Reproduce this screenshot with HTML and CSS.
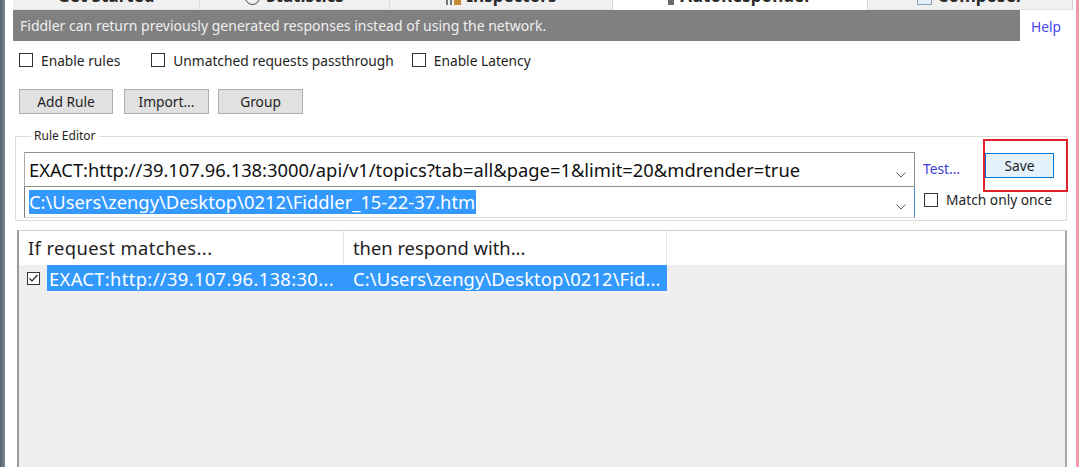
FILE: index.html
```html
<!DOCTYPE html>
<html>
<head>
<meta charset="utf-8">
<link rel="stylesheet" href="styles.css">
</head>
<body>
<div class="app">
  <div class="edge-left"></div>
  <div class="main">
    <div class="tabs">
      <div class="tab t1"><span class="tlabel">Get Started</span></div>
      <div class="tab t2"><span class="ticon round"></span><span class="tlabel">Statistics</span></div>
      <div class="tab t3"><span class="ticon bars"></span><span class="tlabel">Inspectors</span></div>
      <div class="tab t4 active"><span class="ticon bolt"></span><span class="tlabel">AutoResponder</span></div>
      <div class="tab t5"><span class="ticon sheet"></span><span class="tlabel">Composer</span></div>
    </div>
    <div class="content">
      <div class="banner-row">
        <div class="banner">Fiddler can return previously generated responses instead of using the network.</div>
        <a class="help">Help</a>
      </div>
      <div class="opts">
        <label class="chk"><span class="box"></span>Enable rules</label>
        <label class="chk"><span class="box"></span>Unmatched requests passthrough</label>
        <label class="chk"><span class="box"></span>Enable Latency</label>
      </div>
      <div class="btns">
        <button class="btn w94">Add Rule</button>
        <button class="btn w85">Import...</button>
        <button class="btn w85">Group</button>
      </div>
      <fieldset class="editor">
        <legend>Rule Editor</legend>
        <div class="editor-grid">
          <div class="combo c1"><span class="ctext">EXACT:http://39.107.96.138:3000/api/v1/topics?tab=all&amp;page=1&amp;limit=20&amp;mdrender=true</span><svg class="chev" width="10" height="6" viewBox="0 0 10 6"><path d="M0.5 0.5 L5 5 L9.5 0.5" fill="none" stroke="#606060" stroke-width="1"/></svg></div>
          <div class="side1">
            <a class="test">Test...</a>
            <button class="save">Save</button>
          </div>
          <div class="combo c2"><span class="ctext sel">C:\Users\zengy\Desktop\0212\Fiddler_15-22-37.htm</span><svg class="chev" width="10" height="6" viewBox="0 0 10 6"><path d="M0.5 0.5 L5 5 L9.5 0.5" fill="none" stroke="#606060" stroke-width="1"/></svg></div>
          <div class="side2">
            <label class="chk"><span class="box"></span>Match only once</label>
          </div>
        </div>
        <div class="redmark"></div>
      </fieldset>
      <div class="list">
        <div class="lhead">
          <div class="col col1">If request matches...</div>
          <div class="col col2">then respond with...</div>
          <div class="col rest"></div>
        </div>
        <div class="lrow">
          <span class="rchk"><svg width="13" height="13" viewBox="0 0 13 13"><rect x="0.5" y="0.5" width="12" height="12" fill="#fff" stroke="#333"/><path d="M2.5 6.5 L5 9 L10.5 3" fill="none" stroke="#222" stroke-width="1.2"/></svg></span>
          <div class="rsel">
            <span class="rc1">EXACT:http://39.107.96.138:30...</span>
            <span class="rc2">C:\Users\zengy\Desktop\0212\Fid...</span>
          </div>
        </div>
      </div>
    </div>
  </div>
  <div class="edge-right"></div>
</div>
</body>
</html>
```
FILE: styles.css
```css
* { box-sizing: border-box; }
html, body { margin: 0; padding: 0; }
body {
  width: 1080px;
  height: 467px;
  overflow: hidden;
  background: #fff;
  font-family: "Noto Sans", "Open Sans", sans-serif;
  font-size: 13.75px;
  color: #1e1e1e;
}
.app { display: flex; height: 467px; }
.edge-left { width: 5px; background: linear-gradient(90deg, #56616c, #7a8794); flex: none; }
.main { width: 1070px; flex: none; display: flex; flex-direction: column; }
.edge-right { width: 5px; flex: none; background: linear-gradient(90deg, #fff 0, #fff 1px, #f29aab 1px, #f29aab 4px, #fff 4px); }

/* tabs */
.tabs { height: 10px; display: flex; padding-left: 8px; overflow: hidden; }
.tab {
  height: 10px;
  background: #f0f0f0;
  border-right: 1px solid #d9d9d9;
  border-bottom: 1px solid #e3e3e3;
  display: flex;
  justify-content: center;
  align-items: flex-end;
  overflow: hidden;
  gap: 6px;
}
.tab.active { background: #fff; border-bottom-color: #fff; }
.t1 { width: 187px; }
.t2 { width: 190px; }
.t3 { width: 223px; }
.t4 { width: 255px; }
.t5 { width: 205px; border-right: 1px solid #cfcfcf; }
.tlabel {
  font-family: "Noto Sans", sans-serif;
  font-weight: 700;
  font-size: 17px;
  line-height: 17px;
  color: #2a2a2a;
  margin-bottom: 5.5px;
  white-space: nowrap;
}
.ticon { width: 15px; height: 15px; margin-bottom: 4px; flex: none; }
.ticon.round { border: 1.5px solid #444; border-radius: 50%; }
.ticon.bars { background: linear-gradient(90deg, #777 0 2px, transparent 2px 4px, #777 4px 6px, transparent 6px 8px, #c98a3a 8px 14px); }
.ticon.bolt { background: #6a6a6a; width: 6px; }
.ticon.sheet { border: 1px solid #8aa0b8; background: #e6eef7; }

/* content */
.content { padding-left: 8px; flex: 1; display: flex; flex-direction: column; }
.banner-row { display: flex; align-items: center; height: 31px; }
.banner {
  width: 1007px;
  height: 31px;
  background: #808080;
  color: #efefef;
  font-size: 14px;
  line-height: 31px;
  padding-left: 7px;
  letter-spacing: 0;
  white-space: nowrap;
}
.help { color: #4646f0; font-size: 13.75px; margin-left: 11px; margin-top: 2px; }

.opts { display: flex; align-items: center; height: 16px; margin-top: 11px; padding-left: 6px; }
.chk { display: flex; align-items: center; white-space: nowrap; font-size: 13.75px; color: #1e1e1e; }
.box { width: 14px; height: 14px; border: 1px solid #333; background: #fff; margin-right: 8px; flex: none; }
.opts .chk:nth-child(1) { margin-right: 31px; }
.opts .chk:nth-child(2) { margin-right: 18px; }

.btns { display: flex; gap: 11px; margin-top: 21px; padding-left: 6px; }
.btn {
  height: 25px;
  background: #e1e1e1;
  border: 1px solid #adadad;
  font-family: inherit;
  font-size: 13.75px;
  color: #1e1e1e;
  padding: 0;
}
.w94 { width: 94px; }
.w85 { width: 85px; }
.btns .btn:nth-child(3) { margin-left: -2px; }

.editor {
  position: relative;
  margin: 15px 0 0 2px;
  width: 1052px;
  height: 92px;
  border: 1px solid #dcdcdc;
  padding: 7px 8px 0 8px;
}
.editor legend { font-size: 12px; color: #1e1e1e; padding: 0 3px; margin-left: 7px; line-height: 14px; }
.editor-grid { display: grid; grid-template-columns: 891px 1fr; grid-template-rows: 35px 31px; margin-top: 2px; }
.combo {
  position: relative;
  display: flex;
  align-items: center;
  padding-left: 4px;
  background: #fff;
  overflow: hidden;
}
.c1 { border: 1px solid #8f8f8f; border-left-color: #aaa; }
.c2 { border-right: 1px solid #4d90d8; border-bottom: 1px solid #dcdcdc; border-left: 1px solid #7a7a7a; }
.ctext { font-size: 18.35px; line-height: 24px; white-space: nowrap; color: #111; }
.ctext.sel { background: #3399ff; color: #fff; padding-right: 1px; }
.chev { position: absolute; right: 8px; top: 50%; margin-top: 2px; }
.side1 { display: flex; align-items: flex-start; padding-left: 8px; }
.test { color: #3c3cd6; font-size: 13.75px; margin-top: 7px; }
.save {
  margin-left: 25px;
  margin-top: 1px;
  width: 69px;
  height: 25px;
  background: #e5f1fb;
  border: 1px solid #0078d7;
  font-family: inherit;
  font-size: 13.75px;
  color: #1e1e1e;
  padding: 0;
}
.side2 { padding-left: 9px; padding-top: 3px; }
.redmark {
  position: absolute;
  left: 967px;
  top: -4px;
  width: 85px;
  height: 53px;
  border: 2px solid #e0202a;
}

/* list */
.list {
  margin: 9px 0 0 4px;
  width: 1050px;
  flex: 1;
  background: #efefef;
  border-left: 2px solid #9a9a9a;
  border-top: 1px solid #cfcfcf;
  border-right: 2px solid #a8a8a8;
}
.lhead { display: flex; height: 34px; background: #fff; }
.col { font-size: 18.35px; line-height: 34px; padding-left: 9px; white-space: nowrap; color: #1e1e1e; }
.col1 { width: 325px; border-right: 1px solid #e5e5e5; letter-spacing: 0.4px; }
.col2 { width: 323px; border-right: 1px solid #e5e5e5; }
.rest { flex: 1; }
.lrow { display: flex; align-items: center; height: 26px; }
.rchk { width: 28px; display: flex; justify-content: flex-end; padding-right: 7px; flex: none; }
.rchk svg { display: block; }
.rsel { display: flex; background: #3399ff; color: #fff; height: 26px; align-items: center; width: 620px; }
.rc1 { width: 306px; font-size: 18.35px; padding-left: 2px; white-space: nowrap; letter-spacing: 0.35px; }
.rc2 { font-size: 18.35px; white-space: nowrap; letter-spacing: 0.1px; }
```
